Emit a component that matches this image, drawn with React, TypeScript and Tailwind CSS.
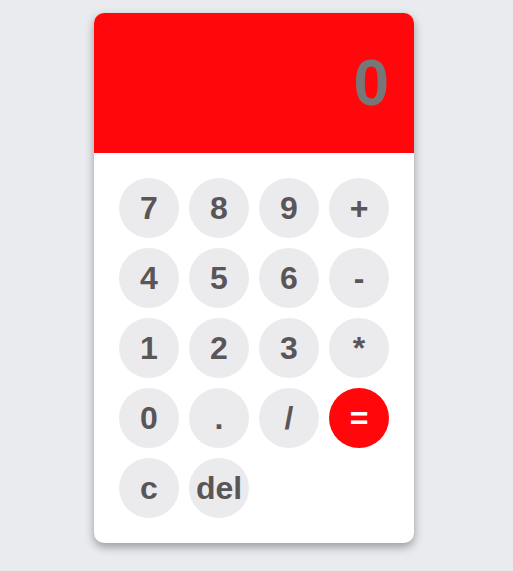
import React from 'react';

const keys = ['7', '8', '9', '+', '4', '5', '6', '-', '1', '2', '3', '*', '0', '.', '/', '=', 'c', 'del'];

export default function App() {
  return (
    <div className="min-h-[571px] w-full bg-[#e9ebee] flex justify-center pt-[13px] pr-[5px] font-['Liberation_Sans',Arial,sans-serif]">
      <div className="w-[320px] h-[530px] bg-white rounded-[10px] overflow-hidden shadow-[0_4px_10px_rgba(0,0,0,0.35)]">
        {/* Display */}
        <div className="h-[140px] bg-[#ff070b] flex items-center justify-end px-[25px]">
          <span className="text-[64px] font-bold text-[#777777] leading-none">0</span>
        </div>

        {/* Keypad */}
        <div className="grid grid-cols-4 gap-[10px] p-[25px]">
          {keys.map((k) => (
            <button
              key={k}
              className={
                k === '='
                  ? 'w-[60px] h-[60px] rounded-full bg-[#ff070b] text-white text-[32px] font-bold flex items-center justify-center'
                  : 'w-[60px] h-[60px] rounded-full bg-[#ebebed] text-[#5a5657] text-[32px] font-bold flex items-center justify-center'
              }
            >
              {k}
            </button>
          ))}
        </div>
      </div>
    </div>
  );
}
